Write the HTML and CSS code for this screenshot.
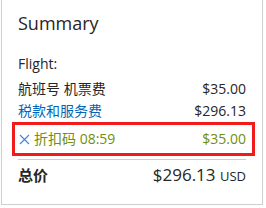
FILE: index.html
```html
<!DOCTYPE html>
<html>
<head>
<meta charset="utf-8">
<link rel="stylesheet" href="styles.css">
</head>
<body>
<div class="card">
  <h2 class="title">Summary</h2>
  <div class="label">Flight:</div>
  <div class="row"><span>航班号 机票费</span><span>$35.00</span></div>
  <div class="row"><span class="link">税款和服务费</span><span>$296.13</span></div>
  <div class="row promo">
    <span class="promo-name"><svg class="x" width="11" height="11" viewBox="0 0 11 11"><path d="M1 1L10 10M10 1L1 10" stroke="#4a86d8" stroke-width="1.2" fill="none"/></svg>折扣码 08:59</span>
    <span>$35.00</span>
  </div>
  <div class="divider"></div>
  <div class="total">
    <span class="total-label">总价</span>
    <span class="total-amount">$296.13 <span class="cur">USD</span></span>
  </div>
</div>
</body>
</html>
```
FILE: styles.css
```css
html, body {
  margin: 0;
  padding: 0;
  background: #fff;
}
body {
  font-family: "Open Sans", "Noto Sans CJK SC", sans-serif;
  color: #262626;
}
.card {
  margin-left: 1px;
  width: 262px;
  height: 205px;
  border: 1px solid #cfcfcf;
  border-top: none;
  padding: 0 16px;
  box-sizing: border-box;
}
.title {
  margin: 0;
  padding-top: 11px;
  font-size: 18px;
  font-weight: 400;
  line-height: 25px;
  color: #262626;
}
.label {
  margin-top: 16px;
  padding-bottom: 2px;
  font-size: 14px;
  line-height: 24px;
}
.row {
  display: flex;
  justify-content: space-between;
  align-items: center;
  font-size: 14px;
  line-height: 22px;
}
.link {
  color: #0067b8;
}
.promo {
  margin: 0 -9px 0 -6px;
  border: 3px solid #f21b1b;
  padding: 0 6px 0 3px;
  height: 28px;
  color: #6f8f10;
}
.promo-name {
  display: flex;
  align-items: center;
}
.x {
  margin: 0 4px 0 1px;
}
.divider {
  height: 1px;
  background: #cfcfcf;
  margin-top: 3px;
}
.total {
  display: flex;
  justify-content: space-between;
  align-items: baseline;
  margin-top: 3px;
}
.total-label {
  font-size: 15px;
  font-weight: 700;
}
.total-amount {
  font-size: 17px;
}
.cur {
  font-size: 13px;
}
```
